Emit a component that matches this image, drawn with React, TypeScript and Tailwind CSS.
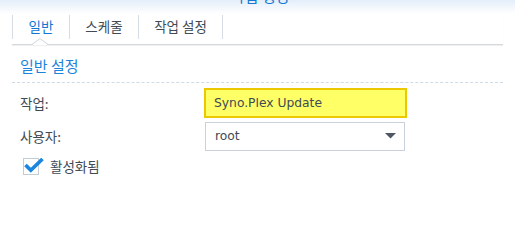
import { useState } from "react";

const ko = { fontFamily: '"Noto Sans CJK KR", "Noto Sans", sans-serif' };
const latin = { fontFamily: '"DejaVu Sans", "Noto Sans CJK KR", sans-serif' };

const tabs = [
  { label: "일반", w: "w-[57px]" },
  { label: "스케줄", w: "w-[69px]" },
  { label: "작업 설정", w: "w-[85px]" },
];

export default function App() {
  const [tab, setTab] = useState(0);
  const [enabled, setEnabled] = useState(true);

  return (
    <div className="w-[515px] h-[250px] bg-white overflow-hidden text-[#414b55]" style={ko}>
      {/* title strip, mostly scrolled off */}
      <div className="h-[14px] bg-gradient-to-b from-[#e3eefa] to-white overflow-hidden">
        <div className="-mt-[14px] h-[19px] text-center text-[15px] leading-[19px] text-[#1478d4] pl-[5px]">
          작업 생성
        </div>
      </div>

      {/* tabs */}
      <div className="relative mx-[12px] h-[30px] border-b border-[#d4d9de] shadow-[0_1px_1px_rgba(0,0,0,0.06)]">
        <div className="flex h-[24px] mt-[1px]">
          {tabs.map((t, i) => (
            <button
              key={t.label}
              onClick={() => setTab(i)}
              className={`${t.w} flex items-center justify-center border-l border-[#d6dde4] text-[13.5px] leading-none ${
                i === tabs.length - 1 ? "border-r" : ""
              } ${tab === i ? "text-[#1176d8]" : "text-[#414b55]"}`}
            >
              {t.label}
            </button>
          ))}
        </div>
        <svg className="absolute left-[20px] -bottom-px" width="16" height="7" viewBox="0 0 16 7">
          <path d="M0 6.5 L8 0.5 L16 6.5" fill="white" stroke="#cfd5db" strokeWidth="1" />
          <rect x="1" y="6" width="14" height="2" fill="white" />
        </svg>
      </div>

      {/* section */}
      <div className="mx-[12px] pt-[11px]">
        <div className="pl-[8px] text-[15px] leading-[20px] text-[#1a84dc] pb-[6px] border-b border-dashed border-[#cfdbe6]">
          일반 설정
        </div>

        <div className="flex flex-col gap-[3px] pt-[5px]">
          <div className="flex items-center h-[30px]">
            <label className="w-[192px] pl-[8px] text-[13.5px]">작업:</label>
            <input
              defaultValue="Syno.Plex Update"
              className="w-[203px] h-[30px] bg-[#ffff66] border-2 border-[#ecc800] px-[8px] text-[12.3px] text-[#414b55] outline-none"
              style={latin}
            />
          </div>
          <div className="flex items-center h-[30px]">
            <label className="w-[193px] pl-[8px] text-[13.5px]">사용자:</label>
            <div className="w-[200px] h-[29px] border border-[#c9d2db] flex items-center justify-between pl-[9px] pr-[8px]">
              <span className="text-[12.3px]" style={latin}>root</span>
              <svg width="11" height="6" viewBox="0 0 11 6">
                <path d="M0 0 H11 L5.5 5.5 Z" fill="#4d5863" />
              </svg>
            </div>
          </div>
        </div>

        <label className="flex items-center gap-[11px] pl-[11px] pt-[5px] cursor-pointer">
          <span className="relative w-[16px] h-[17px] border border-[#c3ccd5] bg-white">
            {enabled && (
              <svg className="absolute -left-px -top-px" width="22" height="17" viewBox="0 0 22 17">
                <path d="M2.5 7 L7.8 12.3 L19.5 1" fill="none" stroke="#1a86e0" strokeWidth="3.6" strokeLinecap="butt" strokeLinejoin="miter" />
              </svg>
            )}
          </span>
          <input type="checkbox" className="hidden" checked={enabled} onChange={() => setEnabled(!enabled)} />
          <span className="text-[13.5px]">활성화됨</span>
        </label>
      </div>
    </div>
  );
}
